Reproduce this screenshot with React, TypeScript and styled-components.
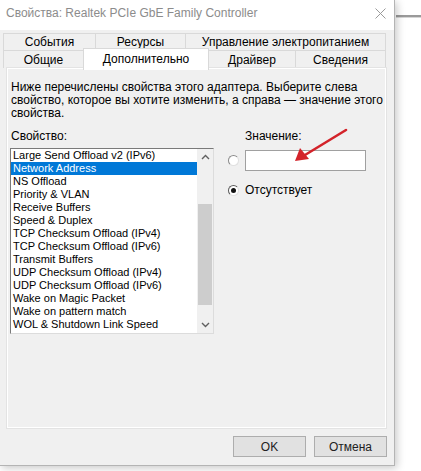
import styled, { createGlobalStyle } from 'styled-components';

const GlobalStyle = createGlobalStyle`
  html, body {
    margin: 0;
    padding: 0;
    background: #ffffff;
  }
  body {
    font-family: "Liberation Sans", Arial, sans-serif;
    font-size: 12px;
    color: #000;
  }
`;

const Page = styled.div`
  position: relative;
  width: 421px;
  height: 471px;
  overflow: hidden;
  background: #fff;
`;

const BackWindowEdge = styled.div`
  position: absolute;
  left: 396px;
  top: 15px;
  width: 25px;
  height: 2px;
  background: #9a9a9a;
  border-bottom: 1px solid #d6d6d6;
`;

const Window = styled.div`
  position: relative;
  width: 394px;
  height: 465px;
  background: #f0f0f0;
  border-right: 1px solid #b4b4b4;
  border-bottom: 1px solid #b4b4b4;
  box-shadow: 2px 2px 8px rgba(0, 0, 0, 0.22);
  display: flex;
  flex-direction: column;
`;

const TitleBar = styled.div`
  height: 30px;
  background: #fff;
  display: flex;
  align-items: center;
  justify-content: space-between;
  padding: 0 8px 4px 6px;
  box-sizing: border-box;
`;

const Title = styled.span`
  color: #8c8c8c;
  font-size: 12px;
`;

const CloseIcon = styled.svg`
  width: 11px;
  height: 11px;
`;

const TabArea = styled.div`
  padding: 3px 0 0 3px;
`;

const TabRow = styled.div<{ $height: number }>`
  display: flex;
  height: ${(p) => p.$height}px;
`;

const Tab = styled.div<{ $width: number; $active?: boolean }>`
  width: ${(p) => p.$width}px;
  box-sizing: border-box;
  display: flex;
  align-items: center;
  justify-content: center;
  border: 1px solid #d9d9d9;
  border-bottom: none;
  margin-left: -1px;
  background: ${(p) => (p.$active ? '#ffffff' : '#f0f0f0')};
  position: relative;
  ${(p) =>
    p.$active &&
    `
    margin-top: -2px;
    height: calc(100% + 4px);
    z-index: 2;
    align-items: flex-start;
    padding-top: 3px;
  `}
  &:first-child {
    margin-left: 0;
  }
`;

const Panel = styled.div`
  position: relative;
  margin: 0 8px 0 7px;
  height: 360px;
  box-sizing: border-box;
  border: 1px solid #ffffff;
  outline: 1px solid #e3e3e3;
  background: #f0f0f0;
  padding: 12px 0 0 3px;
`;

const Description = styled.p`
  margin: 0;
  line-height: 13px;
  width: 372px;
`;

const Columns = styled.div`
  display: grid;
  grid-template-columns: 214px 1fr;
  margin-top: 10px;
`;

const Label = styled.div<{ $indent?: number; $below?: number }>`
  line-height: 13px;
  margin-left: ${(p) => p.$indent ?? 0}px;
  margin-bottom: ${(p) => p.$below ?? 5}px;
`;

const ListBox = styled.div`
  width: 204px;
  height: 186px;
  box-sizing: border-box;
  border: 1px solid;
  border-color: #7a7a7a #dcdcdc #dcdcdc #7a7a7a;
  background: #fff;
  display: flex;
  margin-left: -1px;
  font-size: 11px;
`;

const Items = styled.div`
  flex: 1;
`;

const Item = styled.div<{ $selected?: boolean }>`
  height: 13px;
  line-height: 13px;
  padding-left: 2px;
  white-space: nowrap;
  background: ${(p) => (p.$selected ? '#0078d7' : 'transparent')};
  color: ${(p) => (p.$selected ? '#ffffff' : '#000000')};
`;

const ScrollBar = styled.div`
  width: 16px;
  background: #f0f0f0;
  display: flex;
  flex-direction: column;
  align-items: center;
`;

const ScrollButton = styled.div`
  height: 16px;
  width: 16px;
  display: flex;
  align-items: center;
  justify-content: center;
`;

const ScrollTrack = styled.div`
  flex: 1;
  width: 16px;
  padding-top: 39px;
  padding-bottom: 12px;
  box-sizing: border-box;
  display: flex;
`;

const Thumb = styled.div`
  flex: 1;
  margin: 0 1px;
  background: #cdcdcd;
`;

const RightColumn = styled.div`
  display: flex;
  flex-direction: column;
  padding-left: 3px;
`;

const OptionRow = styled.div<{ $gap?: number }>`
  display: flex;
  align-items: center;
  gap: 6px;
  margin-top: ${(p) => p.$gap ?? 0}px;
`;

const Radio = styled.span<{ $checked?: boolean }>`
  position: relative;
  width: 11px;
  height: 11px;
  border-radius: 50%;
  box-sizing: border-box;
  border: 1px solid ${(p) => (p.$checked ? '#5a5a5a' : '#8a8a8a')};
  border-right-color: #e0e0e0;
  border-bottom-color: #e0e0e0;
  background: #fff;
  &::after {
    content: '';
    display: ${(p) => (p.$checked ? 'block' : 'none')};
    position: absolute;
    left: 2px;
    top: 2px;
    width: 5px;
    height: 5px;
    border-radius: 50%;
    background: #111;
  }
`;

const TextInput = styled.div`
  width: 121px;
  height: 21px;
  box-sizing: border-box;
  border: 1px solid #a0a0a0;
  background: #fff;
`;

const Arrow = styled.svg`
  position: absolute;
  left: 0;
  top: 0;
  width: 421px;
  height: 471px;
  pointer-events: none;
`;

const Footer = styled.div`
  display: flex;
  justify-content: flex-end;
  gap: 8px;
  padding: 8px 7px 0 0;
`;

const Button = styled.div`
  width: 73px;
  height: 21px;
  box-sizing: border-box;
  border: 1px solid #adadad;
  background: #e1e1e1;
  display: flex;
  align-items: center;
  justify-content: center;
  color: #222;
`;

const properties = [
  'Large Send Offload v2 (IPv6)',
  'Network Address',
  'NS Offload',
  'Priority & VLAN',
  'Receive Buffers',
  'Speed & Duplex',
  'TCP Checksum Offload (IPv4)',
  'TCP Checksum Offload (IPv6)',
  'Transmit Buffers',
  'UDP Checksum Offload (IPv4)',
  'UDP Checksum Offload (IPv6)',
  'Wake on Magic Packet',
  'Wake on pattern match',
  'WOL & Shutdown Link Speed',
];

const topTabs = [
  { name: 'События', width: 93 },
  { name: 'Ресурсы', width: 91 },
  { name: 'Управление электропитанием', width: 201 },
];

const bottomTabs = [
  { name: 'Общие', width: 81 },
  { name: 'Дополнительно', width: 126, active: true },
  { name: 'Драйвер', width: 88 },
  { name: 'Сведения', width: 91 },
];

const Chevron = ({ up }: { up?: boolean }) => (
  <svg width="9" height="6" viewBox="0 0 9 6">
    <path
      d={up ? 'M1 5 L4.5 1.5 L8 5' : 'M1 1 L4.5 4.5 L8 1'}
      fill="none"
      stroke="#606060"
      strokeWidth="1.4"
    />
  </svg>
);

const App = () => {
  return (
    <Page>
      <GlobalStyle />
      <BackWindowEdge />
      <Window>
        <TitleBar>
          <Title>Свойства: Realtek PCIe GbE Family Controller</Title>
          <CloseIcon viewBox="0 0 11 11">
            <path d="M0.5 0.5 L10.5 10.5 M10.5 0.5 L0.5 10.5" stroke="#9a9a9a" strokeWidth="1" />
          </CloseIcon>
        </TitleBar>
        <TabArea>
          <TabRow $height={17}>
            {topTabs.map((tab) => (
              <Tab key={tab.name} $width={tab.width}>
                {tab.name}
              </Tab>
            ))}
          </TabRow>
          <TabRow $height={18}>
            {bottomTabs.map((tab) => (
              <Tab key={tab.name} $width={tab.width} $active={tab.active}>
                {tab.name}
              </Tab>
            ))}
          </TabRow>
        </TabArea>
        <Panel>
          <Description>
            Ниже перечислены свойства этого адаптера. Выберите слева свойство, которое вы хотите
            изменить, а справа — значение этого свойства.
          </Description>
          <Columns>
            <div>
              <Label>Свойство:</Label>
              <ListBox>
                <Items>
                  {properties.map((name) => (
                    <Item key={name} $selected={name === 'Network Address'}>
                      {name}
                    </Item>
                  ))}
                </Items>
                <ScrollBar>
                  <ScrollButton>
                    <Chevron up />
                  </ScrollButton>
                  <ScrollTrack>
                    <Thumb />
                  </ScrollTrack>
                  <ScrollButton>
                    <Chevron />
                  </ScrollButton>
                </ScrollBar>
              </ListBox>
            </div>
            <RightColumn>
              <Label $indent={17} $below={7}>Значение:</Label>
              <OptionRow>
                <Radio />
                <TextInput />
              </OptionRow>
              <OptionRow $gap={12}>
                <Radio $checked />
                <span>Отсутствует</span>
              </OptionRow>
            </RightColumn>
          </Columns>
        </Panel>
        <Footer>
          <Button>OK</Button>
          <Button>Отмена</Button>
        </Footer>
      </Window>
      <Arrow viewBox="0 0 421 471">
        <line x1="346" y1="130" x2="305" y2="155" stroke="#d3232a" strokeWidth="2.6" strokeLinecap="round" />
        <polygon points="295,161 300,148 309,159" fill="#d3232a" />
      </Arrow>
    </Page>
  );
};

export default App;
